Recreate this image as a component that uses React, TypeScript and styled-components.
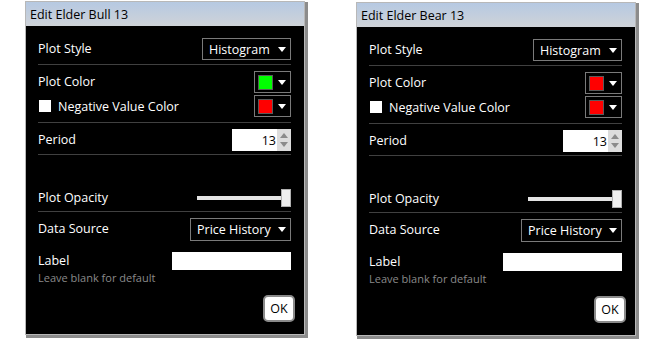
import React from 'react'
import styled, { createGlobalStyle } from 'styled-components'

const GlobalStyle = createGlobalStyle`
  html, body {
    margin: 0;
    padding: 0;
    background: #ffffff;
    font-family: 'Open Sans', 'Noto Sans', sans-serif;
  }
`

type DialogProps = {
  title: string
  plotColor: string
  negColor: string
  shift?: number
}

const EditDialog = ({ title, plotColor, negColor, shift = 0 }: DialogProps) => {
  return (
    <Dialog $shift={shift}>
      <TitleBar>{title}</TitleBar>
      <Body>
        <Row $h={22}>
          <Label>Plot Style</Label>
          <Dropdown $w={89}>
            Histogram
            <Caret />
          </Dropdown>
        </Row>
        <Divider $top={4} $bottom={6} />
        <Row $h={22}>
          <Label>Plot Color</Label>
          <ColorPicker>
            <Swatch $color={plotColor} />
            <Caret />
          </ColorPicker>
        </Row>
        <Row $h={22} $top={2}>
          <CheckLabel>
            <Check />
            Negative Value Color
          </CheckLabel>
          <ColorPicker>
            <Swatch $color={negColor} />
            <Caret />
          </ColorPicker>
        </Row>
        <Divider $top={5} $bottom={6} />
        <Row $h={22}>
          <Label>Period</Label>
          <Spinner>
            <SpinInput>13</SpinInput>
            <SpinButtons>
              <SpinArrow $up />
              <SpinArrow />
            </SpinButtons>
          </Spinner>
        </Row>
        <Divider $top={3} $bottom={34} />
        <Row $h={18}>
          <Label>Plot Opacity</Label>
          <Slider>
            <Track />
            <Thumb />
          </Slider>
        </Row>
        <Divider $top={4} $bottom={6} />
        <Row $h={23}>
          <Label>Data Source</Label>
          <Dropdown $w={101}>
            Price History
            <Caret />
          </Dropdown>
        </Row>
        <LabelRow>
          <LabelText>
            <Label>Label</Label>
            <Hint>Leave blank for default</Hint>
          </LabelText>
          <TextInput />
        </LabelRow>
        <Footer>
          <OkButton>OK</OkButton>
        </Footer>
      </Body>
    </Dialog>
  )
}

const App = () => {
  return (
    <React.Fragment>
      <GlobalStyle />
      <Page>
        <EditDialog title='Edit Elder Bull 13' plotColor='#00ff00' negColor='#ff0000' />
        <EditDialog title='Edit Elder Bear 13' plotColor='#ff0000' negColor='#ff0000' shift={1} />
      </Page>
    </React.Fragment>
  )
}

export default App

const Page = styled.div`
  display: flex;
  gap: 51px;
  padding: 1px 0 0 25px;
  width: 666px;
  height: 344px;
  box-sizing: border-box;
`

const Dialog = styled.div<{ $shift: number }>`
  width: 278px;
  height: 332px;
  margin-top: ${(p) => p.$shift}px;
  border: 1px solid #b8b8b8;
  box-shadow: 2px 2px 0 1px #8c8c8c;
  background: #000;
  display: flex;
  flex-direction: column;
`

const TitleBar = styled.div`
  height: 24px;
  flex: none;
  padding-left: 4px;
  display: flex;
  align-items: center;
  font-size: 12.5px;
  color: #000;
  background: linear-gradient(#b6c9e2, #cfd3d8);
`

const Body = styled.div`
  flex: 1;
  display: flex;
  flex-direction: column;
  padding: 12px 13px 0 12px;
  color: #fff;
  font-size: 12.5px;
`

const Row = styled.div<{ $h: number; $top?: number }>`
  height: ${(p) => p.$h}px;
  margin-top: ${(p) => p.$top ?? 0}px;
  display: flex;
  align-items: center;
  justify-content: space-between;
`

const Label = styled.span`
  color: #fff;
  line-height: 1;
`

const CheckLabel = styled.span`
  display: flex;
  align-items: center;
  gap: 7px;
  padding-left: 1px;
`

const Check = styled.span`
  width: 12px;
  height: 12px;
  background: #fff;
  display: inline-block;
`

const Divider = styled.div<{ $top: number; $bottom: number }>`
  height: 1px;
  background: #404040;
  margin: ${(p) => p.$top}px 0 ${(p) => p.$bottom}px;
`

const Dropdown = styled.div<{ $w: number }>`
  width: ${(p) => p.$w}px;
  height: 100%;
  box-sizing: border-box;
  border: 1px solid #7a7a7a;
  display: flex;
  align-items: center;
  justify-content: space-between;
  padding: 0 4px 0 6px;
  color: #fff;
`

const Caret = styled.span`
  width: 0;
  height: 0;
  border-left: 4px solid transparent;
  border-right: 4px solid transparent;
  border-top: 5px solid #fff;
`

const ColorPicker = styled.div`
  width: 37px;
  height: 100%;
  box-sizing: border-box;
  border: 1px solid #7a7a7a;
  display: flex;
  align-items: center;
  justify-content: space-between;
  padding: 0 4px 0 3px;
`

const Swatch = styled.span<{ $color: string }>`
  width: 13px;
  height: 13px;
  background: ${(p) => p.$color};
  border: 1px solid #5a5a5a;
`

const Spinner = styled.div`
  width: 59px;
  height: 100%;
  display: flex;
`

const SpinInput = styled.div`
  flex: 1;
  background: #fff;
  color: #000;
  display: flex;
  align-items: center;
  justify-content: flex-end;
  padding-right: 1px;
`

const SpinButtons = styled.div`
  width: 14px;
  background: #dcdcdc;
  display: flex;
  flex-direction: column;
  align-items: center;
  justify-content: space-around;
  padding: 2px 0;
  box-sizing: border-box;
`

const SpinArrow = styled.span<{ $up?: boolean }>`
  width: 0;
  height: 0;
  border-left: 4px solid transparent;
  border-right: 4px solid transparent;
  ${(p) => (p.$up ? 'border-bottom: 5px solid #8a8a8a;' : 'border-top: 5px solid #8a8a8a;')}
`

const Slider = styled.div`
  width: 94px;
  height: 100%;
  display: flex;
  align-items: center;
`

const Track = styled.div`
  flex: 1;
  height: 4px;
  background: #e4e4e4;
`

const Thumb = styled.div`
  width: 10px;
  height: 18px;
  box-sizing: border-box;
  background: #efefef;
  border: 1px solid #b0b0b0;
`

const LabelRow = styled.div`
  margin-top: 11px;
  display: flex;
  justify-content: space-between;
  align-items: flex-start;
`

const LabelText = styled.div`
  display: flex;
  flex-direction: column;
  gap: 4px;
  padding-top: 3px;
`

const Hint = styled.span`
  font-size: 11px;
  color: #8a8a8a;
  line-height: 1;
`

const TextInput = styled.div`
  width: 119px;
  height: 18px;
  background: #fff;
`

const Footer = styled.div`
  display: flex;
  justify-content: flex-end;
  margin: 12px -4px 0 0;
`

const OkButton = styled.button`
  width: 32px;
  height: 27px;
  border: 2px solid #8a8a8a;
  border-radius: 5px;
  background: #fff;
  color: #000;
  font-family: inherit;
  font-size: 12.5px;
  padding: 0;
`
